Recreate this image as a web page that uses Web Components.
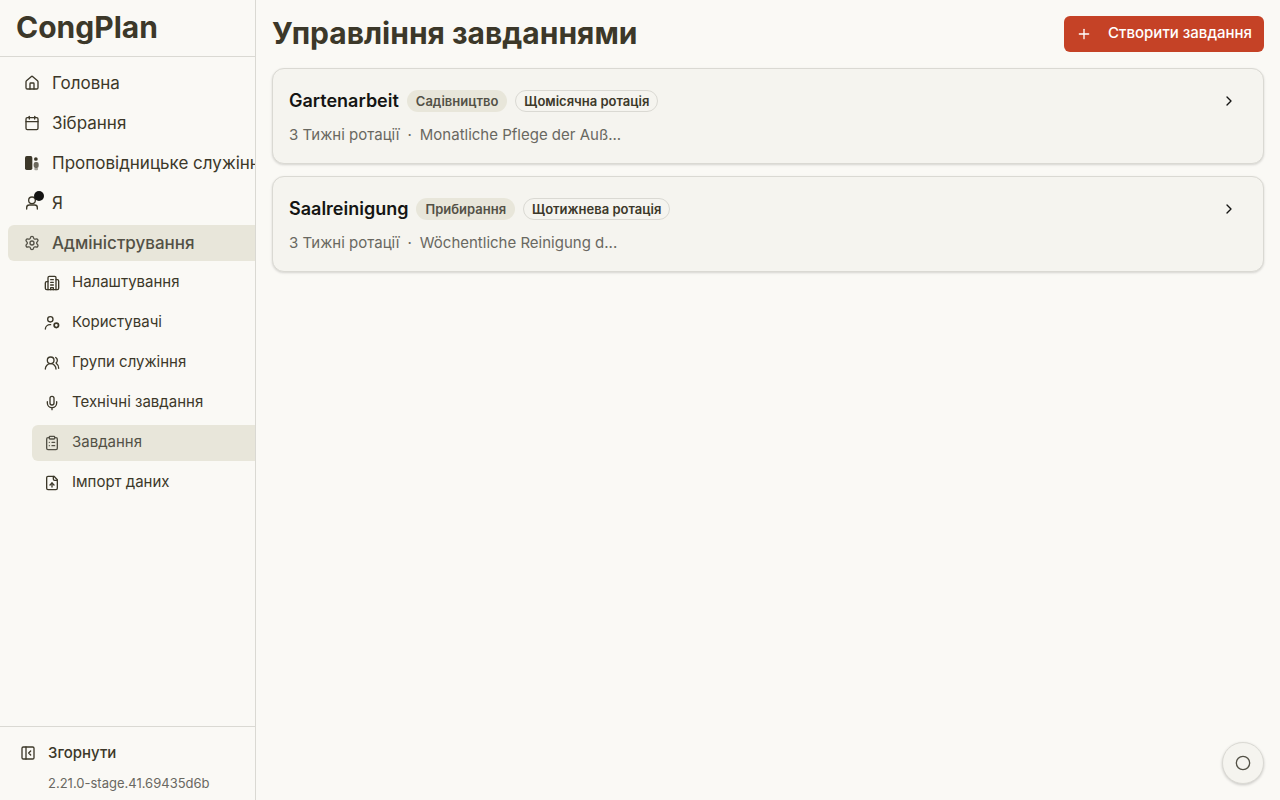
<!DOCTYPE html>
<html lang="uk">
<head>
<meta charset="utf-8">
<title>CongPlan</title>
<style>
  body {
    margin: 0;
    background: #faf9f5;
    color: #3c3829;
    font-family: Inter, "Liberation Sans", sans-serif;
    --line: #dad9d3;
    --accent: #e8e6da;
    --accent-text: #535146;
    --card: #f5f4ef;
    --muted: #696861;
    --primary: #c54226;
  }
</style>
</head>
<body>
  <app-shell>
    <side-bar slot="sidebar" brand="CongPlan" version="2.21.0-stage.41.69435d6b">
      <nav-item icon="house">Головна</nav-item>
      <nav-item icon="calendar">Зібрання</nav-item>
      <nav-item icon="ministry">Проповідницьке служіння</nav-item>
      <nav-item icon="user" notify>Я</nav-item>
      <nav-item icon="settings" active>Адміністрування</nav-item>
      <nav-item sub icon="building">Налаштування</nav-item>
      <nav-item sub icon="user-cog">Користувачі</nav-item>
      <nav-item sub icon="users">Групи служіння</nav-item>
      <nav-item sub icon="mic">Технічні завдання</nav-item>
      <nav-item sub icon="clipboard" active>Завдання</nav-item>
      <nav-item sub icon="file-up">Імпорт даних</nav-item>
    </side-bar>
    <page-header>
      Управління завданнями
      <primary-button slot="action" icon="plus">Створити завдання</primary-button>
    </page-header>
    <task-card>
      <span slot="title">Gartenarbeit</span>
      <tag-badge slot="tags">Садівництво</tag-badge>
      <tag-badge slot="tags" outline>Щомісячна ротація</tag-badge>
      <span slot="weeks">3 Тижні ротації</span>
      <span slot="text">Monatliche Pflege der Auß...</span>
    </task-card>
    <task-card>
      <span slot="title">Saalreinigung</span>
      <tag-badge slot="tags">Прибирання</tag-badge>
      <tag-badge slot="tags" outline>Щотижнева ротація</tag-badge>
      <span slot="weeks">3 Тижні ротації</span>
      <span slot="text">Wöchentliche Reinigung d...</span>
    </task-card>
    <float-button slot="float"></float-button>
  </app-shell>

<script>
const ICONS = {
  house: '<path d="M15 21v-8a1 1 0 0 0-1-1h-4a1 1 0 0 0-1 1v8"/><path d="M3 10a2 2 0 0 1 .709-1.528l7-5.999a2 2 0 0 1 2.582 0l7 5.999A2 2 0 0 1 21 10v9a2 2 0 0 1-2 2H5a2 2 0 0 1-2-2z"/>',
  calendar: '<path d="M8 2v4"/><path d="M16 2v4"/><rect width="18" height="18" x="3" y="4" rx="2"/><path d="M3 10h18"/>',
  ministry: '<g fill="currentColor" stroke="none"><rect x="1.5" y="1.5" width="11" height="21" rx="2.5"/><circle cx="17.8" cy="6" r="2.8"/><rect x="14.5" y="10.500" width="7.5" height="9" rx="3" opacity=".75"/><rect x="15.5" y="19" width="5.5" height="4" rx="1.5" opacity=".45"/></g>',
  user: '<circle cx="12" cy="8" r="5"/><path d="M20 21v-2a4 4 0 0 0-4-4H8a4 4 0 0 0-4 4v2"/>',
  settings: '<path d="M9.671 4.136a2.34 2.34 0 0 1 4.659 0 2.34 2.34 0 0 0 3.319 1.915 2.34 2.34 0 0 1 2.33 4.033 2.34 2.34 0 0 0 0 3.831 2.34 2.34 0 0 1-2.33 4.033 2.34 2.34 0 0 0-3.319 1.915 2.34 2.34 0 0 1-4.659 0 2.34 2.34 0 0 0-3.32-1.915 2.34 2.34 0 0 1-2.33-4.033 2.34 2.34 0 0 0 0-3.831A2.34 2.34 0 0 1 6.35 6.051a2.34 2.34 0 0 0 3.319-1.915"/><circle cx="12" cy="12" r="3"/>',
  building: '<path d="M6 22V4a2 2 0 0 1 2-2h8a2 2 0 0 1 2 2v18"/><path d="M6 10H4a2 2 0 0 0-2 2v8a2 2 0 0 0 2 2h16a2 2 0 0 0 2-2V9a2 2 0 0 0-2-2h-2"/><path d="M10 7h4M10 11h4M10 15h4M10 22v-3h4v3"/>',
  'user-cog': '<circle cx="9.5" cy="6.5" r="4"/><path d="M2 21a7 7 0 0 1 7-6.500h1"/><circle cx="18.500" cy="15.500" r="3.300" stroke-width="2.600"/>',
  users: '<path d="M18 21a8 8 0 0 0-16 0"/><circle cx="10" cy="8" r="5"/><path d="M22 20c0-3.370-2-6.500-4-8a5 5 0 0 0-.450-8.300"/>',
  mic: '<path d="M12 19v3"/><path d="M19 10v2a7 7 0 0 1-14 0v-2"/><rect x="9" y="2" width="6" height="13" rx="3"/>',
  clipboard: '<rect width="8" height="4" x="8" y="2" rx="1"/><path d="M16 4h2a2 2 0 0 1 2 2v14a2 2 0 0 1-2 2H6a2 2 0 0 1-2-2V6a2 2 0 0 1 2-2h2"/><path d="M12 11h4M12 16h4M8 11h.01M8 16h.01"/>',
  'file-up': '<path d="M15 2H6a2 2 0 0 0-2 2v16a2 2 0 0 0 2 2h12a2 2 0 0 0 2-2V7z"/><path d="M14 2v4a2 2 0 0 0 2 2h4"/><path d="M12 12v6"/><path d="m15 15-3-3-3 3"/>',
  collapse: '<rect width="18" height="18" x="3" y="3" rx="2"/><path d="M9 3v18"/><path d="m16 15-3-3 3-3"/>',
  plus: '<path d="M5 12h14"/><path d="M12 5v14"/>',
  chevron: '<path d="m9 18 6-6-6-6"/>',
  circle: '<circle cx="12" cy="12" r="10"/>'
};

class UiIcon extends HTMLElement {
  constructor() {
    super();
    this.attachShadow({ mode: 'open' });
  }

  connectedCallback() {
    this.shadowRoot.innerHTML = `
      <style>
        :host {
          display: block;
          flex: none;
          width: 16px;
          height: 16px;
        }

        svg {
          display: block;
          width: 100%;
          height: 100%;
        }
      </style>
      <svg viewBox="0 0 24 24" fill="none" stroke="currentColor" stroke-width="2"
        stroke-linecap="round" stroke-linejoin="round" aria-hidden="true">${ICONS[this.getAttribute('name')]}</svg>
    `;
  }
}

class AppShell extends HTMLElement {
  constructor() {
    super();
    this.attachShadow({ mode: 'open' });
    this.shadowRoot.innerHTML = `
      <style>
        :host {
          display: grid;
          grid-template-columns: 256px minmax(0, 1fr);
          min-height: 100vh;
        }

        main {
          display: flex;
          flex-direction: column;
          gap: 12px;
          padding: 16px;
        }
      </style>
      <slot name="sidebar"></slot>
      <main><slot></slot></main>
      <slot name="float"></slot>
    `;
  }
}

class SideBar extends HTMLElement {
  constructor() {
    super();
    this.attachShadow({ mode: 'open' });
  }

  connectedCallback() {
    this.shadowRoot.innerHTML = `
      <style>
        :host {
          display: flex;
          flex-direction: column;
          position: sticky;
          top: 0;
          height: 100vh;
          box-sizing: border-box;
          border-right: 1px solid var(--line);
          overflow: hidden;
        }

        header {
          padding: 10px 16px 12px;
          border-bottom: 1px solid var(--line);
          font-size: 30px;
          line-height: 34px;
          font-weight: 700;
        }

        /* grows with its longest label, the sidebar clips it */
        nav {
          flex: 1;
          display: grid;
          align-content: start;
          box-sizing: border-box;
          width: max-content;
          min-width: 100%;
          gap: 4px;
          padding: 8px;
        }

        footer {
          display: grid;
          gap: 4px;
          padding: 8px 8px 9px;
          border-top: 1px solid var(--line);
        }

        button {
          display: flex;
          align-items: center;
          gap: 12px;
          height: 36px;
          padding: 0 12px;
          border: 0;
          border-radius: 6px;
          background: none;
          color: inherit;
          font: 500 15px/20px Inter, sans-serif;
          cursor: pointer;
        }

        small {
          padding-left: 40px;
          color: var(--muted);
          font-size: 13px;
          line-height: 16px;
        }
      </style>
      <header>${this.getAttribute('brand')}</header>
      <nav><slot></slot></nav>
      <footer>
        <button type="button"><ui-icon name="collapse"></ui-icon>Згорнути</button>
        <small>${this.getAttribute('version')}</small>
      </footer>
    `;
  }
}

class NavItem extends HTMLElement {
  constructor() {
    super();
    this.attachShadow({ mode: 'open' });
  }

  connectedCallback() {
    this.shadowRoot.innerHTML = `
      <style>
        :host {
          display: block;
        }

        :host([sub]) {
          margin-left: 24px;
        }

        a {
          display: flex;
          align-items: center;
          gap: 12px;
          height: 36px;
          padding: 0 16px;
          border-radius: 6px;
          color: inherit;
          font-size: 17px;
          line-height: 24px;
          text-decoration: none;
          white-space: nowrap;
        }

        :host([active]) a {
          background: var(--accent);
          color: var(--accent-text);
          font-weight: 500;
        }

        :host([sub]) a {
          padding: 0 12px;
          font-size: 15px;
          font-weight: 400;
        }

        :host([sub]) .label {
          padding-bottom: 2px;
        }

        .icon {
          position: relative;
        }

        .dot {
          position: absolute;
          top: -4px;
          right: -4px;
          width: 10px;
          height: 10px;
          border-radius: 50%;
          background: #141413;
        }
      </style>
      <a href="#">
        <span class="icon">
          <ui-icon name="${this.getAttribute('icon')}"></ui-icon>
          ${this.hasAttribute('notify') ? '<span class="dot"></span>' : ''}
        </span>
        <span class="label"><slot></slot></span>
      </a>
    `;
  }
}

class PageHeader extends HTMLElement {
  constructor() {
    super();
    this.attachShadow({ mode: 'open' });
    this.shadowRoot.innerHTML = `
      <style>
        :host {
          display: flex;
          align-items: flex-start;
          justify-content: space-between;
          gap: 16px;
          min-height: 40px;
        }

        h1 {
          margin: 0;
          font-size: 30px;
          line-height: 34px;
          font-weight: 700;
        }
      </style>
      <h1><slot></slot></h1>
      <slot name="action"></slot>
    `;
  }
}

class PrimaryButton extends HTMLElement {
  constructor() {
    super();
    this.attachShadow({ mode: 'open' });
  }

  connectedCallback() {
    this.shadowRoot.innerHTML = `
      <style>
        :host {
          display: block;
        }

        button {
          display: flex;
          align-items: center;
          gap: 16px;
          height: 36px;
          padding: 0 12px;
          border: 0;
          border-radius: 6px;
          background: var(--primary);
          color: #fff;
          font: 500 15px/20px Inter, sans-serif;
          cursor: pointer;
        }

        span {
          padding-bottom: 2px;
        }
      </style>
      <button type="button">
        <ui-icon name="${this.getAttribute('icon')}"></ui-icon>
        <span><slot></slot></span>
      </button>
    `;
  }
}

class TagBadge extends HTMLElement {
  constructor() {
    super();
    this.attachShadow({ mode: 'open' });
    this.shadowRoot.innerHTML = `
      <style>
        :host {
          display: block;
          padding: 2px 8px;
          border: 1px solid transparent;
          border-radius: 999px;
          background: var(--accent);
          color: var(--accent-text);
          font-size: 13px;
          line-height: 16px;
          font-weight: 600;
          white-space: nowrap;
        }

        :host([outline]) {
          border-color: var(--line);
          background: none;
          color: #3c3829;
        }
      </style>
      <slot></slot>
    `;
  }
}

class TaskCard extends HTMLElement {
  constructor() {
    super();
    this.attachShadow({ mode: 'open' });
    this.shadowRoot.innerHTML = `
      <style>
        :host {
          display: flex;
          align-items: flex-start;
          justify-content: space-between;
          padding: 16px;
          border: 1px solid var(--line);
          border-radius: 12px;
          background: var(--card);
          box-shadow: 0 1px 3px rgba(0, 0, 0, 0.1), 0 1px 2px rgba(0, 0, 0, 0.06);
        }

        .body {
          display: grid;
          gap: 6px;
          min-width: 0;
        }

        .top {
          display: flex;
          align-items: center;
          gap: 8px;
          min-height: 32px;
        }

        h2 {
          margin: 0;
          color: #141413;
          font-size: 18px;
          line-height: 28px;
          font-weight: 600;
        }

        p {
          display: flex;
          gap: 8px;
          margin: 0;
          color: var(--muted);
          font-size: 15px;
          line-height: 24px;
        }

        button {
          display: grid;
          place-items: center;
          width: 36px;
          height: 32px;
          padding: 0;
          border: 0;
          border-radius: 6px;
          background: none;
          color: #141413;
          cursor: pointer;
        }
      </style>
      <div class="body">
        <div class="top">
          <h2><slot name="title"></slot></h2>
          <slot name="tags"></slot>
        </div>
        <p><slot name="weeks"></slot><span>·</span><slot name="text"></slot></p>
      </div>
      <button type="button" aria-label="Відкрити"><ui-icon name="chevron"></ui-icon></button>
    `;
  }
}

class FloatButton extends HTMLElement {
  constructor() {
    super();
    this.attachShadow({ mode: 'open' });
    this.shadowRoot.innerHTML = `
      <style>
        :host {
          display: block;
          position: fixed;
          right: 16px;
          bottom: 16px;
        }

        button {
          display: grid;
          place-items: center;
          width: 42px;
          height: 42px;
          padding: 0;
          border: 1px solid var(--line);
          border-radius: 50%;
          background: var(--card);
          color: var(--accent-text);
          box-shadow: 0 1px 3px rgba(0, 0, 0, 0.2);
          cursor: pointer;
        }
      </style>
      <button type="button" aria-label="Статус"><ui-icon name="circle"></ui-icon></button>
    `;
  }
}

customElements.define('ui-icon', UiIcon);
customElements.define('app-shell', AppShell);
customElements.define('side-bar', SideBar);
customElements.define('nav-item', NavItem);
customElements.define('page-header', PageHeader);
customElements.define('primary-button', PrimaryButton);
customElements.define('tag-badge', TagBadge);
customElements.define('task-card', TaskCard);
customElements.define('float-button', FloatButton);
</script>
</body>
</html>
